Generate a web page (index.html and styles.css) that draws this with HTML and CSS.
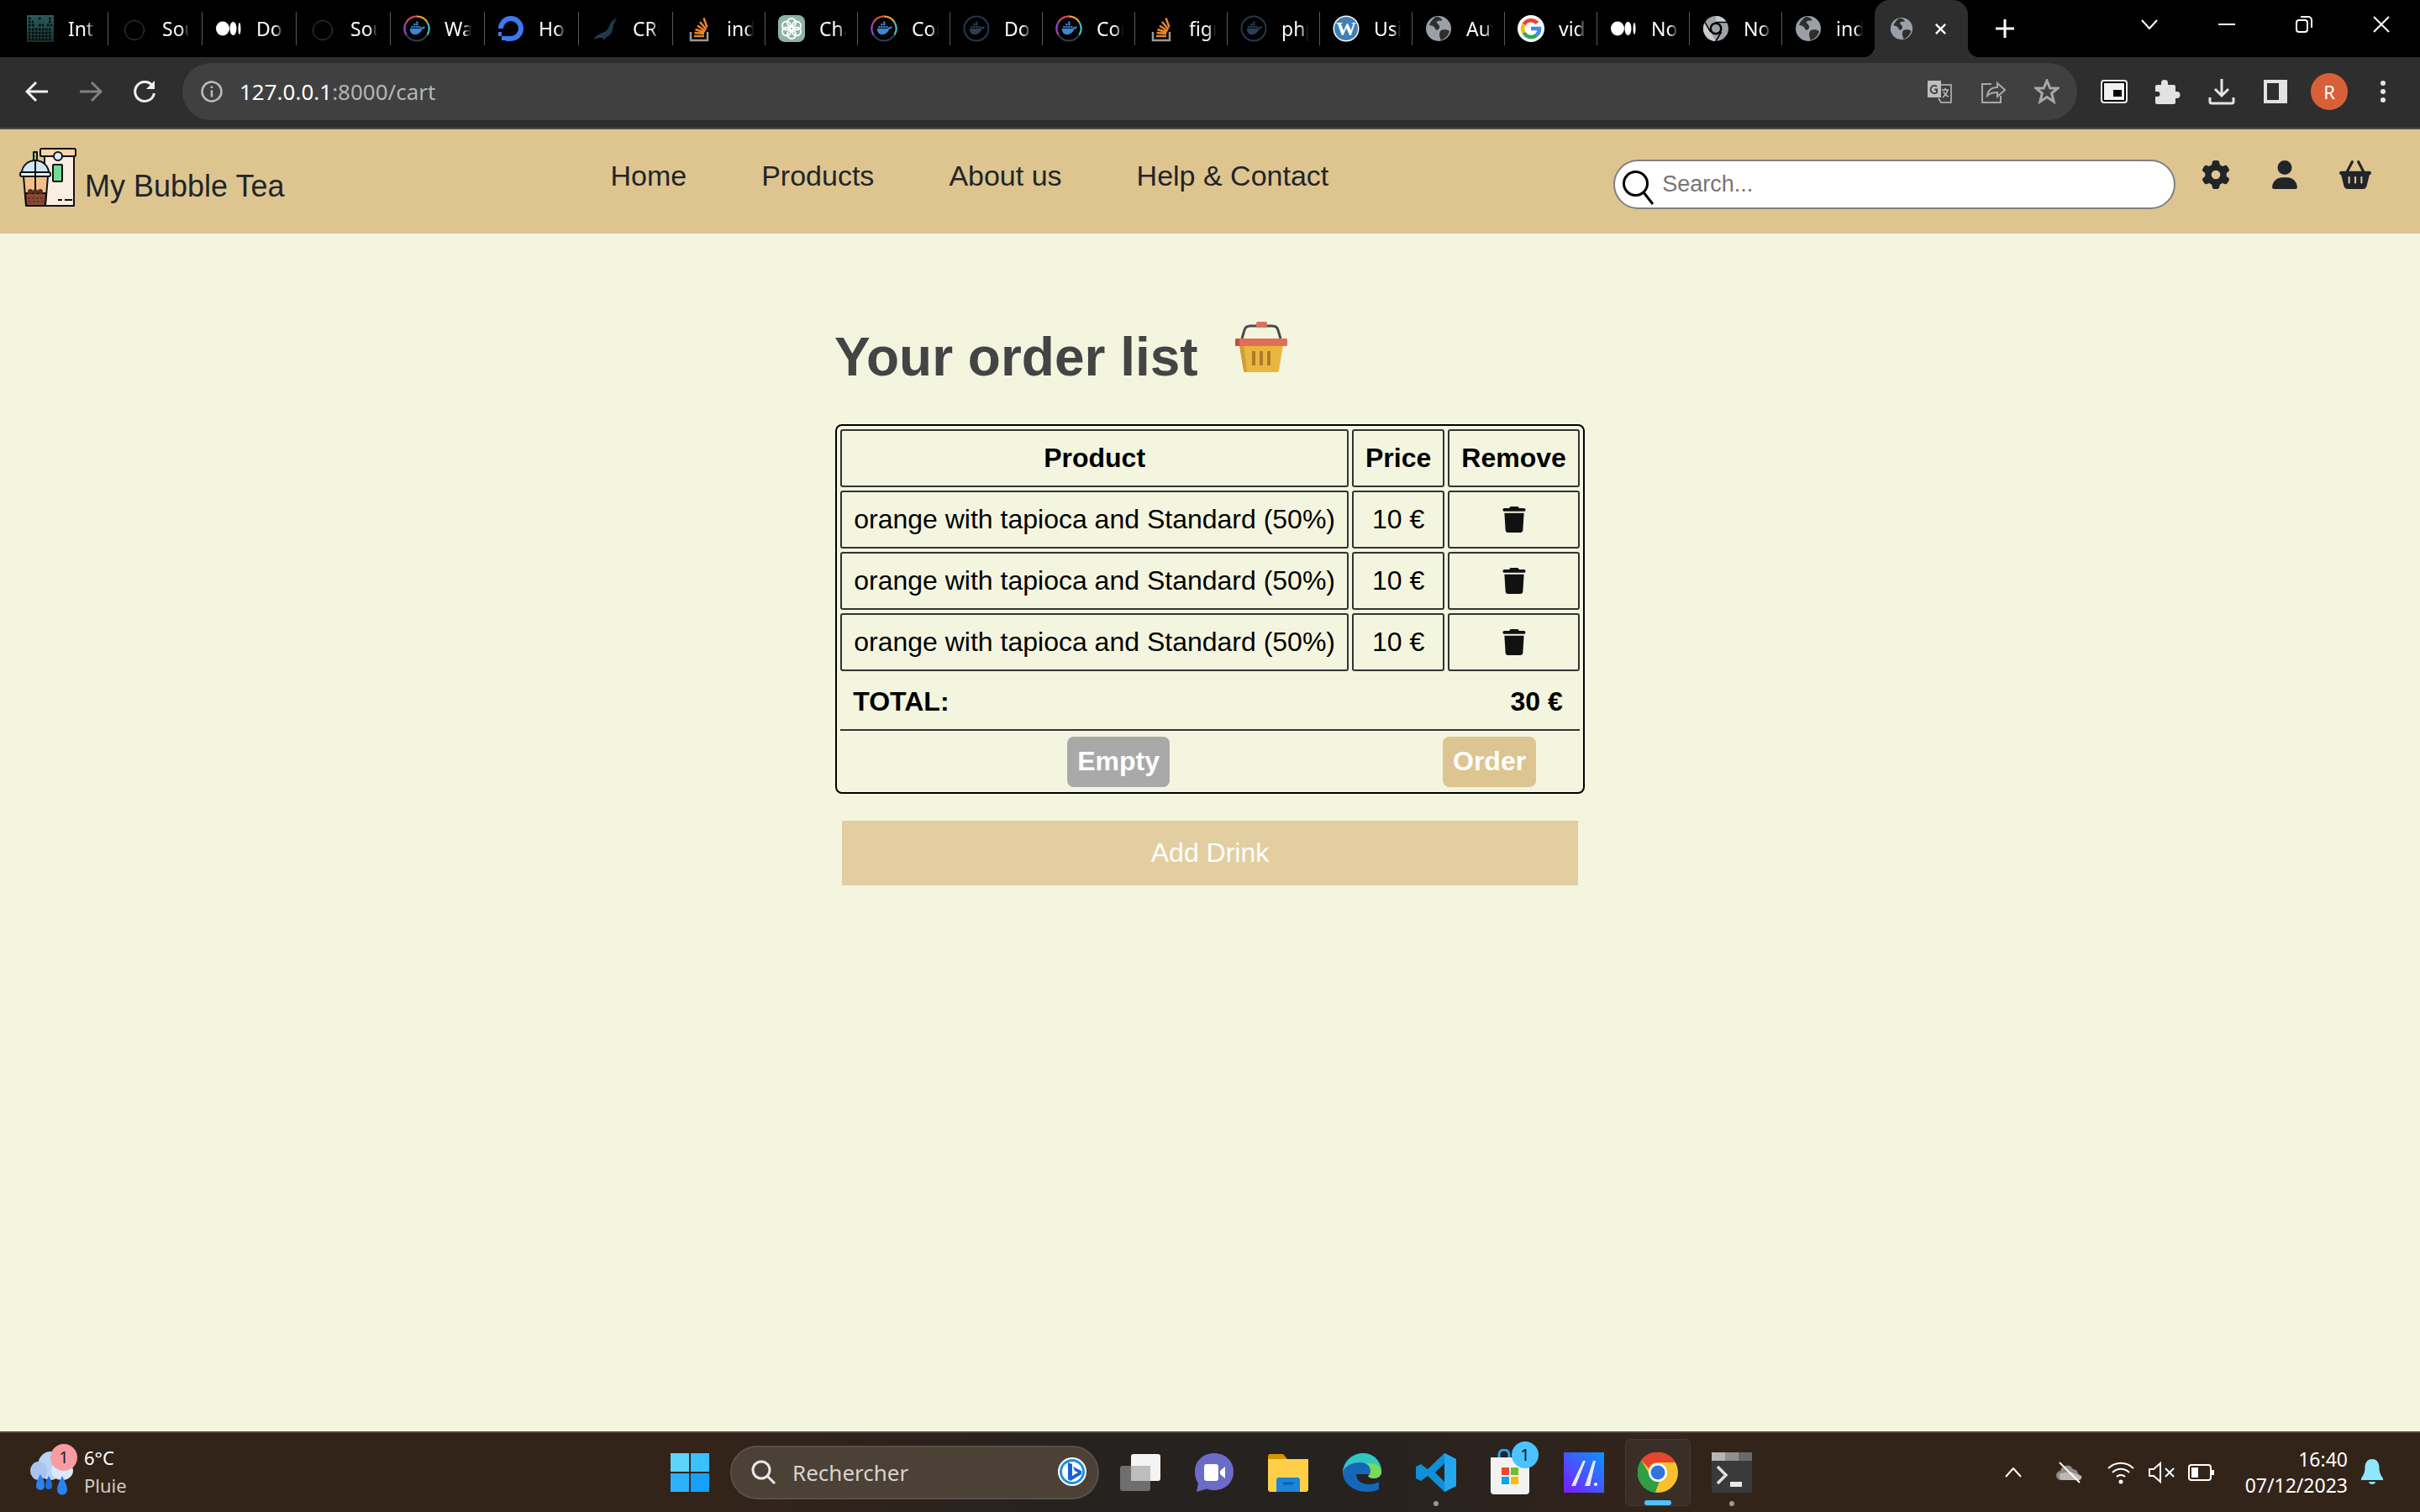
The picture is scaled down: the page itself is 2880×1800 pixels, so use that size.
FILE: index.html
```html
<!DOCTYPE html>
<html lang="en">

<head>
    <meta charset="UTF-8">
    <title>My Bubble Tea</title>
    <link rel="stylesheet" href="styles.css">
</head>

<body>
    <svg class="sprite" aria-hidden="true">
        <defs>
            <linearGradient id="g-intro" x1="0" y1="0" x2="0" y2="1">
                <stop offset="0" stop-color="#2c5a5c" />
                <stop offset="1" stop-color="#16302f" />
            </linearGradient>
            <linearGradient id="g-math" x1="1" y1="0" x2="0" y2="1">
                <stop offset="0" stop-color="#0a96ff" />
                <stop offset="1" stop-color="#7a1cff" />
            </linearGradient>
        </defs>
        <symbol id="i-whale" viewBox="0 0 32 32">
            <path d="M5 16h17c.6-2 2.4-3 4.500-2.400.5-1.100 1.600-1.500 2.500-.9-.2 1.300.2 2.300-1.500 3.300-2 .6-2.600.6-3.200.7C23 22 18.500 25.500 13 25.500c-5 0-7.800-3.500-8-9.500z" />
            <path d="M7 12h3v3H7zM11 12h3v3h-3zM15 12h3v3h-3zM11 8h3v3h-3zM15 8h3v3h-3zM15 4.500h3v3h-3zM19 12h3v3h-3z" />
        </symbol>
        <symbol id="i-docker" viewBox="0 0 32 32">
            <circle cx="16" cy="16" r="14.500" fill="none" stroke="#2c3e50" stroke-width="2" />
            <path d="M16 1.500a14.500 14.500 0 0 1 12.500 7" fill="none" stroke="#f0a030" stroke-width="2" />
            <path d="M28.500 8.500a14.500 14.500 0 0 1 0 15" fill="none" stroke="#39c8c0" stroke-width="2" />
            <path d="M3.500 8.500A14.500 14.500 0 0 1 16 1.500" fill="none" stroke="#e0454f" stroke-width="2" />
            <path d="M3.500 8.500a14.500 14.500 0 0 0 0 15" fill="none" stroke="#a040c8" stroke-width="2" />
            <use href="#i-whale" x="4" y="4" width="24" height="24" fill="#3f86d0" />
        </symbol>
        <symbol id="i-docker-dark" viewBox="0 0 32 32">
            <circle cx="16" cy="16" r="14.500" fill="none" stroke="#24384a" stroke-width="2" />
            <use href="#i-whale" x="4" y="4" width="24" height="24" fill="#2b4058" />
        </symbol>
        <symbol id="i-medium" viewBox="0 0 32 32">
            <ellipse cx="9" cy="16" rx="8" ry="8.500" fill="#fff" />
            <ellipse cx="21.500" cy="16" rx="4" ry="8" fill="#fff" />
            <ellipse cx="29" cy="16" rx="1.500" ry="7" fill="#fff" />
        </symbol>
        <symbol id="i-github" viewBox="0 0 32 32">
            <circle cx="16" cy="18" r="11.500" fill="none" stroke="#454545" stroke-width="1" />
        </symbol>
        <symbol id="i-so" viewBox="0 0 32 32">
            <path d="M6 20v10h20V20" fill="none" stroke="#9a9a9a" stroke-width="2.500" />
            <path d="M10 25h12M10.500 21l11.500 1M11.500 17l11 3.500M14 12.500l9.500 6.500M17 8l7.500 9M21.500 3.500l4 11" fill="none" stroke="#e8862a" stroke-width="2.500" />
        </symbol>
        <symbol id="i-do" viewBox="0 0 32 32">
            <path d="M16 31V25a9 9 0 1 0-9-9H1A15 15 0 1 1 16 31z" fill="#3d78f0" />
            <path d="M10 25h6v6h-6zM5 25h5v5H5zM1 20h4v5H1z" fill="#3d78f0" />
        </symbol>
        <symbol id="i-seal" viewBox="0 0 32 32">
            <path d="M30 3c-2 2-5 3-7 6-3 5-3 9-8 11-4 2-9 3-13 9 5-2 8-2 11-2l2 3c1-2 1-3 3-4 7-3 7-9 8-14 1-3 3-6 4-9z" fill="#1f3a4d" />
        </symbol>
        <symbol id="i-openai" viewBox="0 0 32 32">
            <rect width="32" height="32" rx="8" fill="#8fb3a4" />
            <g fill="none" stroke="#fff" stroke-width="2">
                <circle cx="16" cy="9" r="5" />
                <circle cx="22" cy="12.500" r="5" />
                <circle cx="22" cy="19.500" r="5" />
                <circle cx="16" cy="23" r="5" />
                <circle cx="10" cy="19.500" r="5" />
                <circle cx="10" cy="12.500" r="5" />
            </g>
        </symbol>
        <symbol id="i-wp" viewBox="0 0 32 32">
            <circle cx="16" cy="16" r="15.500" fill="#fff" />
            <circle cx="16" cy="16" r="14" fill="#3f7fb5" />
            <text x="16" y="24" text-anchor="middle" class="wp-letter">W</text>
        </symbol>
        <symbol id="i-globe" viewBox="0 0 32 32">
            <circle cx="16" cy="16" r="15" fill="#9aa0a6" />
            <path d="M13 2c-3 2-7 6-8 10 3 0 6 1 7 4s4 2 5-1-2-4-3-6 4-3 6-2c1-3-3-5-7-5zM19 18c3-1 7-1 10 1-1 5-5 9-10 11-2-4-3-9 0-12z" fill="#2e2e2e" />
        </symbol>
        <symbol id="i-google" viewBox="0 0 32 32">
            <circle cx="16" cy="16" r="16" fill="#fff" />
            <g fill="none" stroke-width="4.500">
                <path d="M23.500 9.500A10 10 0 0 0 7.500 11" stroke="#ea4335" />
                <path d="M7.500 11a10 10 0 0 0 0 10" stroke="#fbbc05" />
                <path d="M7.500 21a10 10 0 0 0 15.500 2.500" stroke="#34a853" />
                <path d="M23 23.500A10 10 0 0 0 26 16H16" stroke="#4285f4" />
            </g>
        </symbol>
        <symbol id="i-chromium" viewBox="0 0 32 32">
            <circle cx="16" cy="16" r="15" fill="#9ea1a5" />
            <path d="M16 1a15 15 0 0 1 13 7.500H16zM3 8.500L9.500 20 16 31a15 15 0 0 1-13-22.500z" fill="#c9cbce" />
            <path d="M16 8.500H29M9.500 20L3 8.500M22.500 20L16 31" stroke="#000" stroke-width="1.500" />
            <circle cx="16" cy="16" r="7.500" fill="#000" />
            <circle cx="16" cy="16" r="5" fill="#9ea1a5" />
        </symbol>
        <symbol id="i-intro" viewBox="0 0 32 32">
            <rect width="32" height="32" fill="url(#g-intro)" />
            <path d="M2 4h3M14 4h3M26 4h4M2 8h6M26 8h4M2 12h8M14 12h6M24 12h6M2 17h28M2 21h28M2 25h28M2 29h28" stroke="#050a0a" stroke-width="2.500" stroke-dasharray="2.500 1.500" />
        </symbol>
        <symbol id="i-trash" viewBox="0 0 448 512">
            <path d="M135.200 17.700L128 32H32C14.300 32 0 46.300 0 64S14.300 96 32 96H416c17.700 0 32-14.300 32-32s-14.300-32-32-32H320l-7.200-14.300C307.400 6.800 296.300 0 284.200 0H163.800c-12.100 0-23.200 6.800-28.600 17.700zM416 128H32L53.200 467c1.600 25.300 22.600 45 47.900 45H346.900c25.300 0 46.300-19.700 47.900-45L416 128z" />
        </symbol>
    </svg>

    <div class="tabstrip">
        <div class="tab"><svg class="tab-icon"><use href="#i-intro" /></svg><span class="tab-label">Intr</span></div>
        <div class="tab"><svg class="tab-icon"><use href="#i-github" /></svg><span class="tab-label">Sour</span></div>
        <div class="tab"><svg class="tab-icon"><use href="#i-medium" /></svg><span class="tab-label">Doc</span></div>
        <div class="tab"><svg class="tab-icon"><use href="#i-github" /></svg><span class="tab-label">Sour</span></div>
        <div class="tab"><svg class="tab-icon"><use href="#i-docker" /></svg><span class="tab-label">Wat</span></div>
        <div class="tab"><svg class="tab-icon"><use href="#i-do" /></svg><span class="tab-label">How</span></div>
        <div class="tab"><svg class="tab-icon"><use href="#i-seal" /></svg><span class="tab-label">CRU</span></div>
        <div class="tab"><svg class="tab-icon"><use href="#i-so" /></svg><span class="tab-label">inde</span></div>
        <div class="tab"><svg class="tab-icon"><use href="#i-openai" /></svg><span class="tab-label">Chat</span></div>
        <div class="tab"><svg class="tab-icon"><use href="#i-docker" /></svg><span class="tab-label">Com</span></div>
        <div class="tab"><svg class="tab-icon"><use href="#i-docker-dark" /></svg><span class="tab-label">Doc</span></div>
        <div class="tab"><svg class="tab-icon"><use href="#i-docker" /></svg><span class="tab-label">Com</span></div>
        <div class="tab"><svg class="tab-icon"><use href="#i-so" /></svg><span class="tab-label">figm</span></div>
        <div class="tab"><svg class="tab-icon"><use href="#i-docker-dark" /></svg><span class="tab-label">php</span></div>
        <div class="tab"><svg class="tab-icon"><use href="#i-wp" /></svg><span class="tab-label">Usin</span></div>
        <div class="tab"><svg class="tab-icon"><use href="#i-globe" /></svg><span class="tab-label">Auth</span></div>
        <div class="tab"><svg class="tab-icon"><use href="#i-google" /></svg><span class="tab-label">vide</span></div>
        <div class="tab"><svg class="tab-icon"><use href="#i-medium" /></svg><span class="tab-label">Not</span></div>
        <div class="tab"><svg class="tab-icon"><use href="#i-chromium" /></svg><span class="tab-label">Nou</span></div>
        <div class="tab tab-last"><svg class="tab-icon"><use href="#i-globe" /></svg><span class="tab-label">inde</span></div>
        <div class="tab-active">
            <svg class="tab-icon-active"><use href="#i-globe" /></svg>
            <svg class="tab-close" viewBox="0 0 16 16"><path d="M2 2l12 12M14 2L2 14" /></svg>
        </div>
        <svg class="new-tab" viewBox="0 0 24 24"><path d="M12 1v22M1 12h22" /></svg>
        <div class="win-controls">
            <div class="win-btn"><svg width="20" height="12" viewBox="0 0 20 12"><path d="M1 1l9 10 9-10" /></svg></div>
            <div class="win-btn"><svg width="20" height="4" viewBox="0 0 20 4"><path d="M0 2h20" /></svg></div>
            <div class="win-btn"><svg width="20" height="20" viewBox="0 0 20 20"><rect x="1" y="5" width="13" height="14" rx="3" /><path d="M6 1h9a4 4 0 0 1 4 4v9" /></svg></div>
            <div class="win-btn"><svg width="20" height="20" viewBox="0 0 20 20"><path d="M1 1l18 18M19 1L1 19" /></svg></div>
        </div>
    </div>

    <div class="toolbar">
        <div class="tool-btn">
            <svg width="28" height="26" viewBox="0 0 28 26" class="line-icon"><path d="M27 13H3M13 2L2 13l11 11" /></svg>
        </div>
        <div class="tool-btn">
            <svg width="28" height="26" viewBox="0 0 28 26" class="line-icon dim"><path d="M1 13h24M15 2l11 11-11 11" /></svg>
        </div>
        <div class="tool-btn">
            <svg width="28" height="28" viewBox="0 0 28 28" class="line-icon"><path d="M24 8a11.500 11.500 0 1 0 1.500 8" /><path class="solid" d="M26 1v10H16z" /></svg>
        </div>
        <div class="addressbar">
            <svg class="info-icon" width="26" height="26" viewBox="0 0 26 26"><circle cx="13" cy="13" r="11.500" /><path d="M13 11.500v8M13 6.500v2.500" /></svg>
            <span class="url">127.0.0.1<span class="url-dim">:8000/cart</span></span>
            <div class="addr-actions">
                <div class="tool-btn">
                    <svg width="30" height="28" viewBox="0 0 30 28"><path fill="#bdbdbd" d="M1 1h16v20H1z" /><path fill="none" stroke="#bdbdbd" stroke-width="1.500" d="M13 6h16v21H17l-3-5" /><path fill="none" stroke="#bdbdbd" stroke-width="1.500" d="M18 12h8M22 10v2M25 12c-1 5-4 7-6 9M20 14c1 3 3 5 6 6" /><path fill="none" stroke="#404040" stroke-width="2" d="M12 8a4.500 4.500 0 1 0 0 7V11.500H9" /></svg>
                </div>
                <div class="tool-btn">
                    <svg width="30" height="30" viewBox="0 0 30 30" class="line-icon gray thin"><path d="M13 6H2v22h22v-8" /><path d="M8 20c1-7 6-10 12-10V5l9 8-9 8v-5c-5 0-9 1-12 4z" /></svg>
                </div>
                <div class="tool-btn">
                    <svg width="30" height="30" viewBox="0 0 30 30" class="line-icon gray"><path d="M15 2l3.800 9H28l-7.400 6 2.600 10L15 21.500 6.800 27l2.600-10L2 11h9.200z" /></svg>
                </div>
            </div>
        </div>
        <div class="tool-group">
            <div class="tool-btn">
                <svg width="32" height="28" viewBox="0 0 32 28"><rect x="1" y="1" width="30" height="26" rx="3" fill="#000" stroke="#f0f0f0" stroke-width="2" /><rect x="4" y="4" width="24" height="20" fill="#f0f0f0" /><rect x="15" y="12" width="10" height="8" fill="#000" /></svg>
            </div>
            <div class="tool-btn">
                <svg width="30" height="30" viewBox="0 0 30 30"><path fill="#e2e2e2" d="M11 1a4 4 0 0 1 4 4v2h7a2 2 0 0 1 2 2v6h1.500a4 4 0 0 1 0 8H24v5a2 2 0 0 1-2 2H2a2 2 0 0 1-2-2v-7h2.500a3 3 0 0 0 0-6H0V9a2 2 0 0 1 2-2h5V5a4 4 0 0 1 4-4z" /></svg>
            </div>
            <div class="tool-btn">
                <svg width="32" height="32" viewBox="0 0 32 32" class="line-icon light"><path d="M16 1v20M8 13l8 8 8-8" /><path d="M2 23v5a2 2 0 0 0 2 2h24a2 2 0 0 0 2-2v-5" /></svg>
            </div>
            <div class="tool-btn">
                <svg width="28" height="28" viewBox="0 0 28 28"><path fill-rule="evenodd" fill="#e2e2e2" d="M0 0h28v28H0zM4 4v20h14V4z" /></svg>
            </div>
            <div class="tool-btn"><div class="avatar">R</div></div>
            <div class="tool-btn">
                <svg width="8" height="28" viewBox="0 0 8 28" class="dots"><circle cx="4" cy="4" r="3" /><circle cx="4" cy="14" r="3" /><circle cx="4" cy="24" r="3" /></svg>
            </div>
        </div>
    </div>

    <header class="site-header">
        <svg class="logo" width="68" height="70" viewBox="0 0 68 70">
            <g stroke="#111" stroke-width="2" stroke-linejoin="round">
                <rect x="30" y="10" width="35" height="59" fill="#faeee4" />
                <rect x="25" y="1" width="42" height="9" rx="1.500" fill="#f6d5a8" />
                <circle cx="46" cy="10" r="5" fill="#d8ecf8" />
                <rect x="40" y="20" width="11" height="20" rx="1" fill="#74d994" />
                <rect x="17" y="5" width="4" height="12" fill="#74d994" />
                <path d="M3 30a16 15 0 0 1 32 0z" fill="#cfe8f8" />
                <path d="M5 34h29l-3 35H8z" fill="#f0c08a" />
                <path d="M7 54h25l-1.500 15H8.500z" fill="#8a4a34" />
                <rect x="1" y="29" width="36" height="5" rx="2" fill="#dff0fa" />
                <path d="M19 16v38" fill="none" />
            </g>
            <g fill="#5b2c1e">
                <circle cx="13" cy="52" r="3" />
                <circle cx="19" cy="52" r="3" />
                <circle cx="25" cy="52" r="3" />
            </g>
            <path d="M10 60h19M11 64h17" stroke="#5b2c1e" stroke-width="1.500" stroke-dasharray="3 2" />
            <path d="M54 62h9M46 62h5" stroke="#111" stroke-width="2" />
        </svg>
        <a class="brand">My Bubble Tea</a>
        <nav class="main-nav">
            <a>Home</a>
            <a>Products</a>
            <a>About us</a>
            <a>Help &amp; Contact</a>
        </nav>
        <div class="search-box">
            <svg width="40" height="42" viewBox="0 0 40 42" class="search-glass"><circle cx="16.500" cy="16.500" r="14" /><path d="M26 27l11 14" /></svg>
            <span class="search-hint">Search...</span>
        </div>
        <div class="header-icons">
            <svg width="34" height="34" viewBox="0 0 512 512"><path d="M495.900 166.600c3.200 8.700 .5 18.400-6.400 24.600l-43.300 39.400c1.100 8.300 1.700 16.800 1.700 25.400s-.6 17.100-1.700 25.400l43.300 39.400c6.900 6.200 9.600 15.900 6.400 24.600c-4.400 11.900-9.700 23.300-15.800 34.300l-4.700 8.100c-6.600 11-14 21.400-22.100 31.200c-5.900 7.200-15.700 9.600-24.500 6.800l-55.700-17.700c-13.400 10.300-28.200 18.900-44 25.400l-12.500 57.100c-2 9.100-9 16.300-18.200 17.800c-13.800 2.300-28 3.500-42.500 3.500s-28.700-1.200-42.500-3.500c-9.200-1.500-16.200-8.700-18.200-17.800l-12.500-57.100c-15.800-6.500-30.600-15.100-44-25.400L83.100 425.900c-8.800 2.800-18.600 .3-24.500-6.800c-8.100-9.800-15.500-20.200-22.100-31.200l-4.700-8.100c-6.100-11-11.400-22.400-15.800-34.300c-3.200-8.700-.5-18.400 6.400-24.600l43.300-39.400C64.600 273.100 64 264.600 64 256s.6-17.100 1.700-25.400L22.400 191.200c-6.900-6.200-9.600-15.900-6.400-24.600c4.400-11.900 9.700-23.300 15.800-34.300l4.700-8.100c6.600-11 14-21.400 22.100-31.200c5.900-7.200 15.700-9.600 24.500-6.800l55.700 17.700c13.400-10.300 28.200-18.900 44-25.400l12.500-57.100c2-9.100 9-16.300 18.200-17.800C227.300 1.200 241.500 0 256 0s28.700 1.200 42.500 3.500c9.200 1.500 16.200 8.700 18.200 17.800l12.500 57.100c15.800 6.500 30.600 15.100 44 25.400l55.700-17.700c8.800-2.800 18.600-.3 24.500 6.800c8.100 9.800 15.500 20.200 22.100 31.200l4.700 8.100c6.100 11 11.400 22.400 15.800 34.300zM256 336a80 80 0 1 0 0-160 80 80 0 1 0 0 160z" /></svg>
            <svg width="30" height="34" viewBox="0 0 448 512"><path d="M224 256A128 128 0 1 0 224 0a128 128 0 1 0 0 256zm-45.700 48C79.800 304 0 383.800 0 482.300C0 498.700 13.300 512 29.700 512H418.300c16.400 0 29.700-13.300 29.700-29.700C448 383.800 368.200 304 269.700 304H178.300z" /></svg>
            <svg width="38" height="34" viewBox="0 0 576 512"><path d="M253.300 35.100c6.100-11.800 1.500-26.300-10.200-32.400s-26.300-1.500-32.400 10.200L117.600 192H32c-17.700 0-32 14.300-32 32s14.300 32 32 32L83.900 463.500C91 492 116.600 512 146 512H430c29.400 0 55-20 62.100-48.500L544 256c17.700 0 32-14.300 32-32s-14.300-32-32-32H458.400L365.300 12.900C359.200 1.200 344.700-3.400 332.900 2.700s-16.300 20.600-10.200 32.400L404.300 192H171.700L253.300 35.100zM192 304v96c0 8.800-7.200 16-16 16s-16-7.200-16-16V304c0-8.800 7.200-16 16-16s16 7.200 16 16zm96-16c8.800 0 16 7.200 16 16v96c0 8.800-7.200 16-16 16s-16-7.200-16-16V304c0-8.800 7.200-16 16-16zm128 16v96c0 8.800-7.200 16-16 16s-16-7.200-16-16V304c0-8.800 7.200-16 16-16s16 7.200 16 16z" /></svg>
        </div>
    </header>

    <main class="cart">
        <div class="cart-title">
            <h1>Your order list</h1>
            <svg class="title-basket" width="62" height="60" viewBox="0 0 62 60">
                <path d="M8 20l3-10c1-4 3-5 7-5h26c4 0 6 1 7 5l3 10" fill="none" stroke="#4a4a4a" stroke-width="3" />
                <rect x="25" y="0" width="13" height="7" rx="2" fill="#e06f5a" />
                <path d="M5 28h52l-5 30a2 2 0 0 1-2 2H12a2 2 0 0 1-2-2z" fill="#e9b63f" />
                <path d="M5 28h5l4 32h-2a2 2 0 0 1-2-2z" fill="#cf9d33" />
                <rect x="20" y="35" width="4" height="17" fill="#ae7a26" />
                <rect x="29" y="35" width="4" height="17" fill="#ae7a26" />
                <rect x="38" y="35" width="4" height="17" fill="#ae7a26" />
                <rect x="0" y="20" width="62" height="9" rx="1.500" fill="#e06f5a" />
                <rect x="0" y="20" width="5" height="9" rx="1.500" fill="#c55040" />
            </svg>
        </div>

        <table class="cart-table">
            <thead>
                <tr>
                    <th>Product</th>
                    <th>Price</th>
                    <th>Remove</th>
                </tr>
            </thead>
            <tbody>
                <tr>
                    <td>orange with tapioca and Standard (50%)</td>
                    <td class="center">10 €</td>
                    <td class="center"><svg class="trash"><use href="#i-trash" /></svg></td>
                </tr>
                <tr>
                    <td>orange with tapioca and Standard (50%)</td>
                    <td class="center">10 €</td>
                    <td class="center"><svg class="trash"><use href="#i-trash" /></svg></td>
                </tr>
                <tr>
                    <td>orange with tapioca and Standard (50%)</td>
                    <td class="center">10 €</td>
                    <td class="center"><svg class="trash"><use href="#i-trash" /></svg></td>
                </tr>
            </tbody>
            <tfoot>
                <tr>
                    <td colspan="3" class="total-cell">
                        <div class="total-row"><span>TOTAL:</span><span>30 €</span></div>
                    </td>
                </tr>
                <tr>
                    <td colspan="3" class="actions-cell">
                        <div class="cart-actions">
                            <button class="btn btn-empty">Empty</button>
                            <button class="btn btn-order">Order</button>
                        </div>
                    </td>
                </tr>
            </tfoot>
        </table>

        <button class="add-drink">Add Drink</button>
    </main>

    <footer class="taskbar">
        <div class="weather">
            <svg width="52" height="56" viewBox="0 0 52 56">
                <ellipse cx="24" cy="20" rx="15" ry="17" fill="#b9d2f5" />
                <ellipse cx="10" cy="26" rx="10" ry="11" fill="#a9c4ee" />
                <ellipse cx="38" cy="26" rx="13" ry="11" fill="#dce8fa" />
                <path d="M12 30c4 6 5 10 5 14a5 5 0 0 1-10 0c0-4 2-9 5-14zM38 32c3 6 6 12 6 16a5.500 6 0 0 1-12 0c0-4 3-10 6-16z" fill="#2a84f0" />
                <path d="M22 32c3 5 4 8 4 12a4 4 0 0 1-8 0c0-4 2-8 4-12z" fill="#1b6fe0" />
            </svg>
            <span class="weather-badge">1</span>
            <div class="weather-text">
                <span>6°C</span>
                <span class="weather-sub">Pluie</span>
            </div>
        </div>
        <div class="task-start">
            <svg width="46" height="46" viewBox="0 0 46 46">
                <path fill="#5fd4fb" d="M0 0h22v22H0z" /><path fill="#3bc0fb" d="M24 0h22v22H24z" /><path fill="#2cb2fb" d="M0 24h22v22H0z" /><path fill="#16a0fa" d="M24 24h22v22H24z" />
            </svg>
        </div>
        <div class="task-search">
            <svg width="32" height="32" viewBox="0 0 32 32" class="task-glass"><circle cx="13" cy="13" r="10" /><path d="M20.500 20.500L29 29" /></svg>
            <span>Rechercher</span>
            <svg class="bing" width="36" height="38" viewBox="0 0 36 38">
                <circle cx="18" cy="18" r="17" fill="#fff" />
                <circle cx="18" cy="18" r="13.500" fill="none" stroke="#1b8fe0" stroke-width="3" />
                <path d="M13 7l5 2v14l7-4-4-2-2-5 10 5v4l-13 8-3-2z" fill="#1a60d8" />
            </svg>
        </div>
        <div class="task-icons">
            <div class="task-item">
                <svg width="48" height="44" viewBox="0 0 48 44"><rect x="0" y="14" width="36" height="30" rx="3" fill="#6e6e6e" /><rect x="13" y="0" width="35" height="32" rx="3" fill="#f4f4f4" /><rect x="13" y="14" width="23" height="18" fill="#bdbdbd" /></svg>
            </div>
            <div class="task-item">
                <svg width="48" height="48" viewBox="0 0 48 48"><path d="M24 1c13 0 23 9 23 22S37 45 24 45c-3 0-6-.5-9-1.500L3 47l2-10C2 33 1 28 1 23 1 10 11 1 24 1z" fill="#6b6bc8" /><rect x="12" y="14" width="17" height="20" rx="3" fill="#fff" /><path d="M31 22l6-5v14l-6-5z" fill="#fff" /></svg>
            </div>
            <div class="task-item">
                <svg width="48" height="46" viewBox="0 0 48 46"><path d="M0 4a3 3 0 0 1 3-3h15l5 6H0z" fill="#d49500" /><path d="M0 7h48v36a3 3 0 0 1-3 3H3a3 3 0 0 1-3-3z" fill="#ffcf4a" /><path d="M10 32a3 3 0 0 1 3-3h22a3 3 0 0 1 3 3v14H10z" fill="#1b84d8" /><path d="M18 36h12" stroke="#0e5ca8" stroke-width="3" /></svg>
            </div>
            <div class="task-item">
                <svg width="48" height="48" viewBox="0 0 48 48"><path d="M47 26H17c0 8 7 12 15 12 5 0 9-1 12-3v9c-4 2-8 3-14 3C13 47 1 36 1 24 1 10 12 1 25 1c13 0 22 10 22 22z" fill="#1567b8" /><path d="M1 24C2 11 13 1 25 1c13 0 22 10 22 22 0 5-4 8-9 8-3 0-6-1-7-3 2-1 3-3 3-6 0-6-6-10-12-10C12 12 3 16 1 24z" fill="#31c7c0" /><path d="M47 23c0 5-4 8-9 8-3 0-6-1-7-3 2-1 3-3 3-6 0-4-2-7-5-9 10-1 18 3 18 10z" fill="#7ad957" /></svg>
            </div>
            <div class="task-item">
                <svg width="48" height="48" viewBox="0 0 48 48"><path d="M34 1l14 7v32l-14 7L14 28l-8 6-6-3V17l6-3 8 6zM34 13L23 24l11 11z" fill="#0e8fd8" /><path d="M34 1l14 7v32l-14 7z" fill="#22a6ee" /></svg>
                <span class="run-dot"></span>
            </div>
            <div class="task-item">
                <svg width="46" height="56" viewBox="0 0 46 56"><path d="M10 10V6c0-3 3-5 6-5s6 2 6 5v4" fill="none" stroke="#27a8f2" stroke-width="3" /><path d="M0 10h46v40a4 4 0 0 1-4 4H4a4 4 0 0 1-4-4z" fill="#f2f2f2" /><path d="M13 22h9v9h-9z" fill="#e8492e" /><path d="M24 22h9v9h-9z" fill="#6fbd2c" /><path d="M13 33h9v9h-9z" fill="#0ea5ea" /><path d="M24 33h9v9h-9z" fill="#fdb900" /></svg>
                <span class="store-badge">1</span>
            </div>
            <div class="task-item">
                <svg width="48" height="48" viewBox="0 0 48 48"><rect width="48" height="48" fill="url(#g-math)" /><path d="M9 40L23 10h3L14 40zM25 40l10-30h3l-7 30z" fill="#e8e8f8" /><circle cx="38" cy="38" r="2" fill="#fff" /></svg>
            </div>
            <div class="task-item task-active">
                <svg width="48" height="48" viewBox="0 0 48 48">
                    <circle cx="24" cy="24" r="24" fill="#fbc02d" />
                    <path d="M24 0a24 24 0 0 1 20.800 12H24a12 12 0 0 0-11 7L4 9A24 24 0 0 1 24 0z" fill="#e8452f" />
                    <path d="M4 9l10.500 18c2 3.500 5.500 5 9.500 5 .9 0 1.800-.1 2.600-.3L21 48C9 46.500 0 36 0 24c0-5.500 1.500-10.500 4-15z" fill="#2e9e47" />
                    <circle cx="24" cy="24" r="11" fill="#fff" />
                    <circle cx="24" cy="24" r="8.500" fill="#2f74e0" />
                </svg>
                <span class="run-bar"></span>
            </div>
            <div class="task-item">
                <svg width="48" height="48" viewBox="0 0 48 48"><rect width="48" height="48" rx="2" fill="#3a3a3a" /><rect width="16" height="10" fill="#b5b5b5" /><rect x="16" width="16" height="10" fill="#8f8f8f" /><rect x="32" width="16" height="10" fill="#6a6a6a" /><path d="M7 17l10 10-10 10" fill="none" stroke="#e0e0e0" stroke-width="3.500" /><rect x="22" y="35" width="14" height="6" fill="#e8e8e8" /></svg>
                <span class="run-dot"></span>
            </div>
        </div>
        <div class="tray">
            <div class="tray-icons">
                <svg class="tray-caret" width="20" height="12" viewBox="0 0 20 12"><path d="M1 11l9-10 9 10" /></svg>
                <svg class="tray-cloud" width="32" height="26" viewBox="0 0 32 26"><path class="cloud-back" d="M7 22a5.500 5.500 0 0 1-1-11 8 8 0 0 1 15-2 6.500 6.500 0 0 1 6 5 4.500 4.500 0 0 1 0 8z" /><path class="cloud-front" d="M7 22a5.500 5.500 0 0 1-1-8l12-2 13 5c1 3-1 5-4 5z" /><path d="M5 1l24 24" /></svg>
                <svg class="tray-wifi" width="32" height="28" viewBox="0 0 32 28"><path d="M1 9a21 21 0 0 1 30 0M6 14a14 14 0 0 1 20 0M11 19a7 7 0 0 1 10 0" /><circle class="solid" cx="16" cy="25" r="2.500" /></svg>
                <svg class="tray-sound" width="32" height="28" viewBox="0 0 32 28"><path d="M2 10h5l8-7v22l-8-7H2z" /><path d="M21 9l10 10M31 9L21 19" /></svg>
                <svg class="tray-batt" width="32" height="28" viewBox="0 0 32 28"><rect x="1" y="5" width="26" height="18" rx="3" /><rect class="solid" x="4" y="8" width="8" height="12" /><rect class="solid" x="28" y="11" width="3" height="6" /></svg>
            </div>
            <div class="clock">
                <span>16:40</span>
                <span>07/12/2023</span>
            </div>
            <svg class="bell" width="26" height="32" viewBox="0 0 26 32"><path d="M13 0c6 0 8.500 5 8.500 10 0 5 1 8 4.500 13a1 1 0 0 1-1 2H1a1 1 0 0 1-1-2c3.500-5 4.500-8 4.500-13C4.500 5 7 0 13 0z" fill="#8ee6ff" /><path d="M9 27h8c0 2-2 3-4 3s-4-1-4-3z" fill="#8ee6ff" /></svg>
        </div>
    </footer>
</body>

</html>
```

FILE: styles.css
```css
* {
    margin: 0;
    padding: 0;
    box-sizing: border-box;
}
html, body {
    height: 100%;
}
body {
    display: flex;
    flex-direction: column;
    height: 1800px;
    overflow: hidden;
    background: #f3f5df;
    font-family: "Liberation Sans", Arial, sans-serif;
}
.sprite {
    position: absolute;
    width: 0;
    height: 0;
}
.wp-letter {
    font: bold 24px "Liberation Serif", serif;
    fill: #fff;
}

/* browser tabs */
.tabstrip {
    height: 68px;
    flex: none;
    display: flex;
    align-items: center;
    padding-left: 17px;
    background: #000;
    font-family: "Noto Sans", sans-serif;
}
.tab {
    width: 110px;
    height: 40px;
    flex: none;
    display: flex;
    align-items: center;
    padding-left: 15px;
    border-right: 1px solid #5a5a5a;
}
.tab:nth-child(-n+7) {
    width: 112px;
}
.tab-last {
    border-right: none;
}
.tab-icon {
    width: 32px;
    height: 32px;
    flex: none;
}
.tab-label {
    width: 32px;
    margin-left: 17px;
    overflow: hidden;
    color: #fff;
    font-size: 23px;
    white-space: nowrap;
    -webkit-mask-image: linear-gradient(to right, #000 70%, transparent);
    mask-image: linear-gradient(to right, #000 70%, transparent);
}
.tab-active {
    position: relative;
    width: 111px;
    height: 68px;
    flex: none;
    display: flex;
    align-items: center;
    padding-left: 18px;
    background: #2e2e2e;
    border-radius: 18px 18px 0 0;
}
.tab-active::before,
.tab-active::after {
    content: "";
    position: absolute;
    bottom: 0;
    width: 14px;
    height: 14px;
}
.tab-active::before {
    left: -14px;
    background: radial-gradient(circle at 0 0, transparent 14px, #2e2e2e 14.5px);
}
.tab-active::after {
    right: -14px;
    background: radial-gradient(circle at 100% 0, transparent 14px, #2e2e2e 14.5px);
}
.tab-icon-active {
    width: 28px;
    height: 28px;
}
.tab-close {
    width: 15px;
    height: 15px;
    margin-left: 25px;
    fill: none;
    stroke: #fff;
    stroke-width: 2.5;
}
.new-tab {
    width: 24px;
    height: 24px;
    margin-left: 32px;
    fill: none;
    stroke: #fff;
    stroke-width: 3;
}
.win-controls {
    display: flex;
    margin-left: auto;
    padding-bottom: 10px;
}
.win-btn {
    width: 92px;
    display: flex;
    justify-content: center;
    align-items: center;
}
.win-btn svg {
    fill: none;
    stroke: #fff;
    stroke-width: 2;
}

/* browser toolbar */
.toolbar {
    height: 86px;
    flex: none;
    display: flex;
    align-items: center;
    padding: 0 12px 2px;
    background: #2e2e2e;
    border-bottom: 2px solid #4c4c4c;
}
.tool-btn {
    width: 64px;
    flex: none;
    display: flex;
    justify-content: center;
    align-items: center;
}
.line-icon {
    fill: none;
    stroke: #f0f0f0;
    stroke-width: 3;
}
.line-icon.dim {
    stroke: #808080;
}
.line-icon.gray {
    stroke: #a8a8a8;
}
.line-icon.thin {
    stroke-width: 2;
}
.line-icon.light {
    stroke: #e4e4e4;
}
.line-icon .solid {
    fill: #f0f0f0;
    stroke: none;
}
.addressbar {
    width: 2255px;
    height: 68px;
    flex: none;
    display: flex;
    align-items: center;
    margin-left: 13px;
    padding: 0 4px 0 22px;
    background: #404040;
    border-radius: 34px;
}
.info-icon {
    flex: none;
    fill: none;
    stroke: #bdbdbd;
    stroke-width: 2.5;
}
.url {
    margin-left: 20px;
    color: #fff;
    font: 26px "Noto Sans", sans-serif;
}
.url-dim {
    color: #b5b5b5;
}
.addr-actions {
    display: flex;
    margin-left: auto;
}
.tool-group {
    display: flex;
    margin-left: 12px;
}
.avatar {
    width: 44px;
    height: 44px;
    border-radius: 50%;
    background: #d95f38;
    color: #fff;
    font: 22px/44px "Noto Sans", sans-serif;
    text-align: center;
}
.dots {
    fill: #e4e4e4;
}

/* site header */
.site-header {
    height: 124px;
    flex: none;
    display: flex;
    align-items: flex-start;
    padding-left: 23px;
    background: #dec590;
    color: #212529;
}
.logo {
    flex: none;
    margin-top: 22px;
}
.brand {
    margin: 48px 0 0 10px;
    font-size: 36px;
    line-height: 40px;
    white-space: nowrap;
}
.main-nav {
    display: flex;
    gap: 89px;
    margin: 35px 0 0 388px;
    font-size: 34px;
    line-height: 40px;
    white-space: nowrap;
}
.search-box {
    width: 669px;
    height: 59px;
    flex: none;
    display: flex;
    align-items: center;
    margin: 36px 0 0 339px;
    padding-left: 8px;
    background: #fff;
    border: 2px solid #808080;
    border-radius: 30px;
}
.search-glass {
    flex: none;
    margin-top: 6px;
    fill: none;
    stroke: #000;
    stroke-width: 3;
}
.search-hint {
    margin-left: 8px;
    color: #757575;
    font-size: 27px;
}
.header-icons {
    display: flex;
    align-items: flex-start;
    gap: 50px;
    margin: 37px 0 0 31px;
    fill: #212529;
}

/* cart */
.cart {
    flex: 1;
    display: flex;
    flex-direction: column;
    align-items: center;
    padding-top: 111px;
    background: #f3f5df;
}
.cart-title {
    width: 890px;
    height: 72px;
    display: flex;
    align-items: flex-start;
    margin-bottom: 44px;
}
.cart-title h1 {
    margin-left: -2px;
    color: #444;
    font-size: 64px;
    font-weight: bold;
    line-height: 72px;
    white-space: nowrap;
}
.title-basket {
    flex: none;
    margin: -6px 0 0 44px;
}
.cart-table {
    width: 890px;
    border: 2px solid #000;
    border-radius: 8px;
    border-collapse: separate;
    border-spacing: 4px;
    color: #000;
    font-size: 32px;
}
.cart-table th,
.cart-table tbody td {
    height: 69px;
    padding: 0 14px;
    border: 2px solid #333;
    border-radius: 3px;
    white-space: nowrap;
}
.center {
    text-align: center;
}
.trash {
    display: block;
    width: 28px;
    height: 31px;
    margin: 0 auto;
    fill: #111;
}
.total-cell {
    height: 67px;
    padding: 0;
    border-bottom: 2px solid #333;
}
.total-row {
    display: flex;
    justify-content: space-between;
    padding: 0 20px 0 15px;
    font-weight: bold;
}
.actions-cell {
    height: 65px;
    padding: 0;
}
.cart-actions {
    display: flex;
    gap: 325px;
    padding-left: 270px;
}
.btn {
    height: 60px;
    padding: 0 12px;
    border: none;
    border-radius: 8px;
    color: #fff;
    font: bold 32px "Liberation Sans", Arial, sans-serif;
}
.btn-empty {
    background: #a9a9a9;
}
.btn-order {
    background: #dcc590;
}
.add-drink {
    width: 876px;
    height: 77px;
    margin-top: 32px;
    border: none;
    background: #e2cea0;
    color: #fff;
    font: 32px "Liberation Sans", Arial, sans-serif;
}

/* windows taskbar */
.taskbar {
    height: 96px;
    flex: none;
    display: flex;
    align-items: center;
    padding-left: 36px;
    background: linear-gradient(to right, #33241a 30%, #262220 45%, #262220 55%, #33241a 70%);
    border-top: 2px solid #4e463c;
    color: #fff;
    font-family: "Noto Sans", sans-serif;
}
.weather {
    position: relative;
    width: 736px;
    flex: none;
    display: flex;
    align-items: center;
}
.weather-badge {
    position: absolute;
    left: 24px;
    top: -3px;
    width: 32px;
    height: 32px;
    border-radius: 50%;
    background: #f99ca2;
    color: #222;
    font-size: 20px;
    line-height: 32px;
    text-align: center;
}
.weather-text {
    display: flex;
    flex-direction: column;
    gap: 6px;
    margin-left: 12px;
    padding-bottom: 3px;
    font-size: 22px;
    line-height: 27px;
}
.weather-sub {
    color: #cfcac3;
}
.task-start {
    width: 97px;
    flex: none;
    display: flex;
    justify-content: center;
}
.task-search {
    width: 439px;
    height: 64px;
    flex: none;
    display: flex;
    align-items: center;
    padding: 0 12px 0 22px;
    background: #4c4136;
    border: 2px solid #5a4f44;
    border-radius: 32px;
    color: #d8d4ce;
    font-size: 26px;
}
.task-glass {
    flex: none;
    margin-right: 18px;
    fill: none;
    stroke: #e8e8e8;
    stroke-width: 3;
}
.bing {
    margin-left: auto;
}
.task-icons {
    display: flex;
    margin-left: 5px;
}
.task-item {
    position: relative;
    width: 88px;
    height: 80px;
    display: flex;
    justify-content: center;
    align-items: center;
}
.task-item svg {
    position: relative;
}
.task-active::before {
    content: "";
    position: absolute;
    top: 0;
    bottom: 0;
    left: 5px;
    right: 5px;
    background: #3a2f26;
    border: 1px solid #463b31;
    border-radius: 6px;
}
.run-dot {
    position: absolute;
    left: 41px;
    bottom: 0;
    width: 6px;
    height: 6px;
    border-radius: 50%;
    background: #9a9a9a;
}
.run-bar {
    position: absolute;
    left: 28px;
    bottom: 1px;
    width: 32px;
    height: 6px;
    border-radius: 3px;
    background: #4cc2ff;
}
.store-badge {
    position: absolute;
    left: 46px;
    top: 3px;
    width: 32px;
    height: 32px;
    border-radius: 50%;
    background: #4cc2ff;
    color: #111;
    font-size: 20px;
    line-height: 32px;
    text-align: center;
}
.tray {
    display: flex;
    align-items: center;
    margin-left: auto;
    padding-right: 44px;
}
.tray-icons {
    display: flex;
    align-items: center;
    gap: 16px;
    margin-right: 36px;
}
.tray-icons svg {
    fill: none;
    stroke: #fff;
    stroke-width: 2;
}
.tray-icons .solid {
    fill: #fff;
    stroke: none;
}
.tray-icons .cloud-back {
    fill: #8e8a84;
    stroke: none;
}
.tray-icons .cloud-front {
    fill: #bdb9b2;
    stroke: none;
}
.tray-caret {
    margin-right: 24px;
}
.tray-cloud {
    margin-right: 14px;
}
.clock {
    display: flex;
    flex-direction: column;
    align-items: flex-end;
    gap: 4px;
    font-size: 23px;
    line-height: 27px;
}
.bell {
    margin-left: 16px;
}
```
